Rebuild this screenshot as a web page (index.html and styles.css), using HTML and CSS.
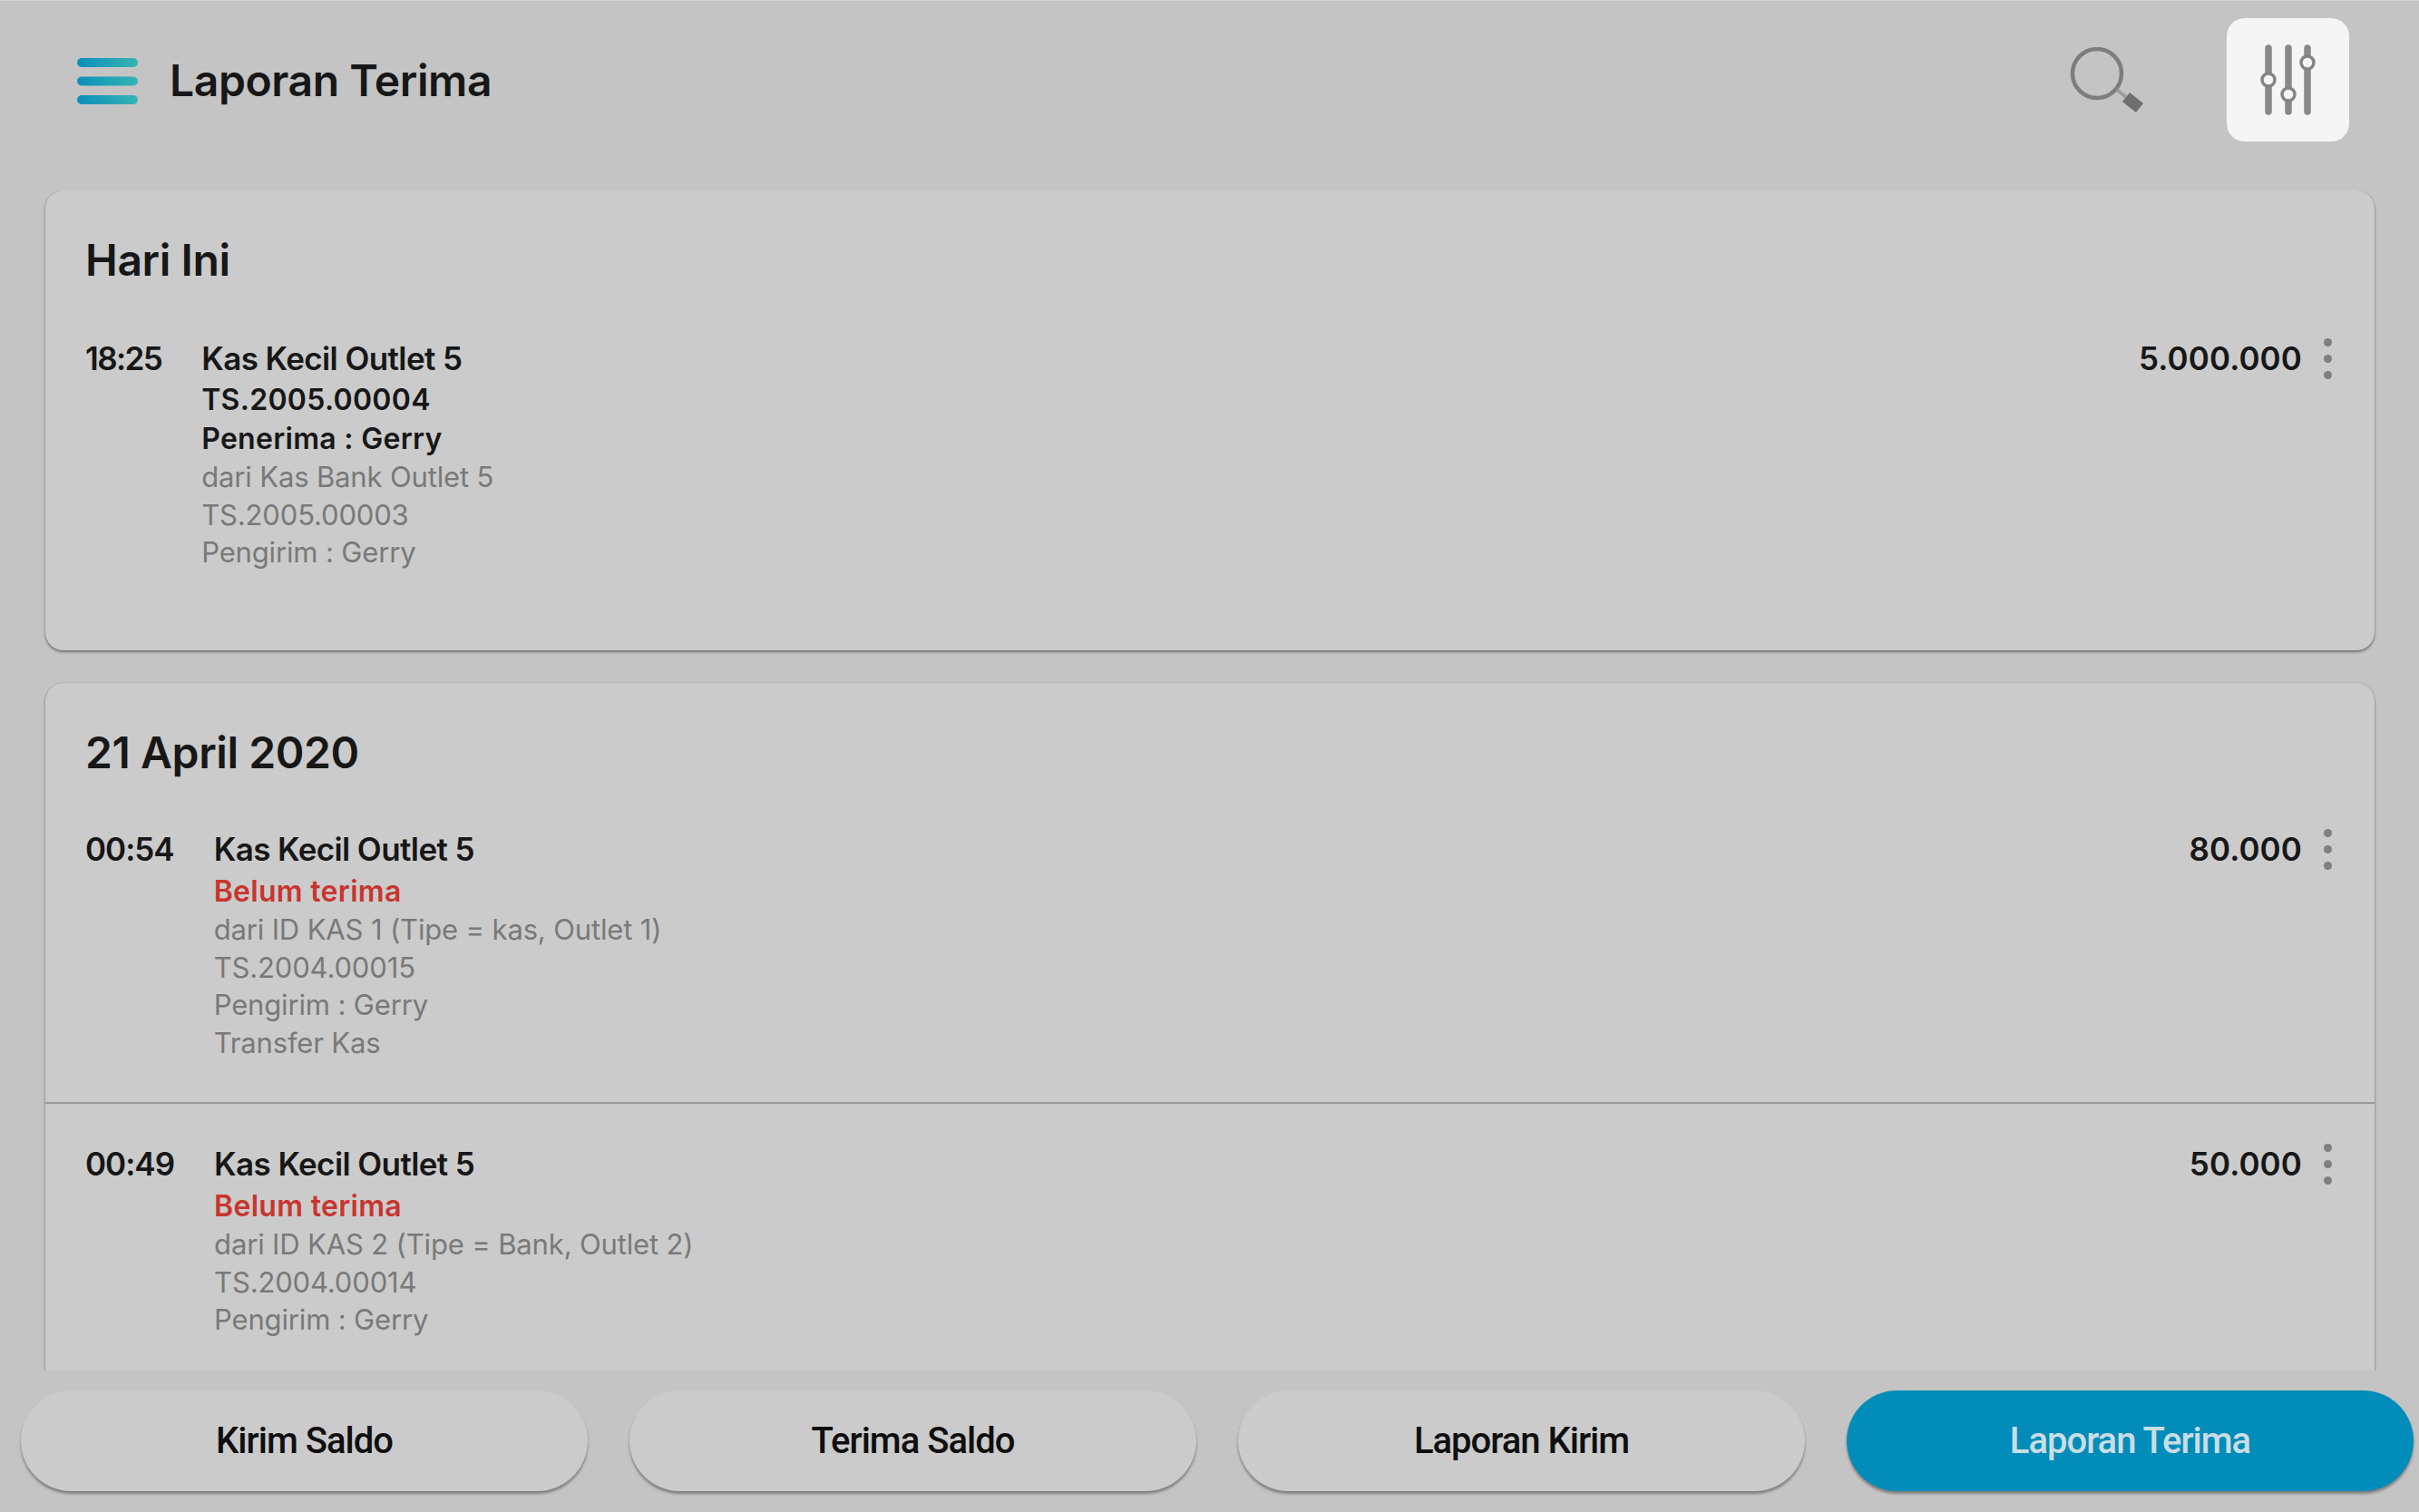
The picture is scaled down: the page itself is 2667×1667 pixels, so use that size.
FILE: index.html
```html
<!DOCTYPE html>
<html lang="id">
<head>
<meta charset="utf-8">
<title>Laporan Terima</title>
<link rel="stylesheet" href="styles.css">
</head>
<body>
<div class="app">
  <header class="topbar">
    <svg class="menu-icon" viewBox="0 0 67 51" width="67" height="51" aria-hidden="true">
      <defs><linearGradient id="mg" x1="0" x2="1" y1="0" y2="0"><stop offset="0" stop-color="#0b8fbb"/><stop offset="1" stop-color="#37b4b2"/></linearGradient></defs>
      <rect x="0" y="0" width="67" height="10" rx="5" fill="url(#mg)"/>
      <rect x="0" y="20.5" width="67" height="10" rx="5" fill="url(#mg)"/>
      <rect x="0" y="41" width="67" height="10" rx="5" fill="url(#mg)"/>
    </svg>
    <h1 class="page-title">Laporan Terima</h1>
    <svg class="search-icon" viewBox="0 0 82 74" width="82" height="74" aria-hidden="true">
      <circle cx="30" cy="29" r="27" fill="none" stroke="#7d7d7d" stroke-width="4.5"/>
      <line x1="52" y1="47" x2="62" y2="55" stroke="#9c9c9c" stroke-width="4"/>
      <line x1="62" y1="55" x2="77" y2="67" stroke="#6f6f6f" stroke-width="13"/>
    </svg>
    <button class="filter-btn" aria-label="Filter">
      <svg viewBox="0 0 66 78" width="66" height="78" aria-hidden="true">
        <g fill="none" stroke="#888888" stroke-width="7.5" stroke-linecap="round">
          <line x1="11" y1="4" x2="11" y2="74"/>
          <line x1="33" y1="4" x2="33" y2="74"/>
          <line x1="54" y1="4" x2="54" y2="74"/>
        </g>
        <g fill="#f5f5f5" stroke="#858585" stroke-width="3.5">
          <circle cx="11" cy="39" r="7"/>
          <circle cx="33" cy="55" r="7"/>
          <circle cx="54" cy="20" r="7"/>
        </g>
      </svg>
    </button>
  </header>

  <main class="content">
    <section class="card card-today">
      <h2 class="card-date">Hari Ini</h2>
      <article class="row">
        <div class="time">18:25</div>
        <div class="details">
          <div class="name">Kas Kecil Outlet 5</div>
          <div class="strong">TS.2005.00004</div>
          <div class="strong">Penerima : Gerry</div>
          <div class="muted">dari Kas Bank Outlet 5</div>
          <div class="muted">TS.2005.00003</div>
          <div class="muted">Pengirim : Gerry</div>
        </div>
        <div class="amount">5.000.000</div>
        <div class="kebab"><i></i><i></i><i></i></div>
      </article>
    </section>

    <section class="card">
      <h2 class="card-date">21 April 2020</h2>
      <article class="row row-divided">
        <div class="time">00:54</div>
        <div class="details">
          <div class="name">Kas Kecil Outlet 5</div>
          <div class="alert">Belum terima</div>
          <div class="muted">dari ID KAS 1 (Tipe = kas, Outlet 1)</div>
          <div class="muted">TS.2004.00015</div>
          <div class="muted">Pengirim : Gerry</div>
          <div class="muted">Transfer Kas</div>
        </div>
        <div class="amount">80.000</div>
        <div class="kebab"><i></i><i></i><i></i></div>
      </article>
      <article class="row row-next">
        <div class="time">00:49</div>
        <div class="details">
          <div class="name">Kas Kecil Outlet 5</div>
          <div class="alert">Belum terima</div>
          <div class="muted">dari ID KAS 2 (Tipe = Bank, Outlet 2)</div>
          <div class="muted">TS.2004.00014</div>
          <div class="muted">Pengirim : Gerry</div>
        </div>
        <div class="amount">50.000</div>
        <div class="kebab"><i></i><i></i><i></i></div>
      </article>
    </section>
  </main>

  <nav class="tabs">
    <button class="tab">Kirim Saldo</button>
    <button class="tab">Terima Saldo</button>
    <button class="tab">Laporan Kirim</button>
    <button class="tab tab-active">Laporan Terima</button>
  </nav>
</div>
</body>
</html>
```
FILE: styles.css
```css
* { box-sizing: border-box; }
html, body { margin: 0; padding: 0; }
body {
  background: #c4c4c4;
  color: #171717;
  font-family: Inter, Roboto, sans-serif;
  overflow: hidden;
}
.app {
  width: 2667px;
  height: 1667px;
  display: flex;
  flex-direction: column;
  border-top: 1px solid #d2d2d2;
}
.topbar {
  height: 209px;
  flex: none;
  display: flex;
  align-items: flex-start;
  padding: 19px 0 0 85px;
}
.menu-icon { margin-top: 44px; flex: none; }
.page-title {
  margin: 39px auto 0 35px;
  font-size: 48px;
  line-height: 60px;
  font-weight: 600;
  letter-spacing: -0.4px;
}
.search-icon { margin: 32px 91px 0 0; flex: none; }
.filter-btn {
  width: 135px;
  height: 136px;
  margin-right: 77px;
  background: #f5f5f5;
  border: 0;
  border-radius: 20px;
  padding: 0;
  display: flex;
  align-items: center;
  justify-content: center;
}
.content {
  height: 1301px;
  flex: none;
  overflow: hidden;
  padding: 0 49px 0 50px;
}
.card {
  background: #cbcbcb;
  border-radius: 20px;
  box-shadow: 0 2px 3px rgba(0,0,0,.4), 0 0 2px rgba(0,0,0,.18);
  margin-bottom: 36px;
}
.card-today { height: 507px; }
.card-date {
  margin: 0;
  padding: 47px 0 0 44px;
  font-size: 48px;
  line-height: 60px;
  font-weight: 600;
  letter-spacing: -0.4px;
}
.row {
  display: flex;
  align-items: flex-start;
  padding: 56px 36px 0 44px;
}
.time, .name, .amount {
  font-size: 35px;
  line-height: 44px;
  font-weight: 600;
  letter-spacing: -0.6px;
}
.name { margin-bottom: 3px; }
.time { margin-right: 44px; letter-spacing: -1px; }
.card-today .time { margin-right: 44px; letter-spacing: -1.6px; }
.amount { letter-spacing: 0.1px; }
.details { flex: 1; }
.strong, .alert {
  font-size: 32px;
  font-weight: 600;
  letter-spacing: 0.3px;
}
.strong { line-height: 42.5px; }
.alert { color: #c8352f; line-height: 43px; }
.muted {
  color: #797979;
  font-size: 31px;
  line-height: 41.7px;
  letter-spacing: -0.15px;
}
.kebab {
  width: 9px;
  margin: 0 11px 0 24px;
  display: flex;
  flex-direction: column;
  gap: 9px;
}
.kebab i {
  display: block;
  width: 9px;
  height: 9px;
  border-radius: 50%;
  background: #7f7f7f;
}
.row-divided {
  padding-top: 54px;
  padding-bottom: 44px;
  border-bottom: 2px solid #9a9a9a;
}
.row-next { padding-top: 44px; padding-bottom: 120px; }
.tabs {
  height: 156px;
  flex: none;
  display: flex;
  gap: 46px;
  padding: 22px 6px 0 23px;
  align-items: flex-start;
}
.tab {
  flex: 1;
  height: 111px;
  border: 0;
  border-radius: 56px;
  background: #cbcbcb;
  color: #0f0f0f;
  font-family: Roboto, "Liberation Sans", sans-serif;
  font-size: 40px;
  font-weight: 500;
  letter-spacing: -1px;
  box-shadow: 0 3px 3px rgba(0,0,0,.35);
}
.tab-active {
  background: #028cba;
  color: #c9dde4;
}
```
